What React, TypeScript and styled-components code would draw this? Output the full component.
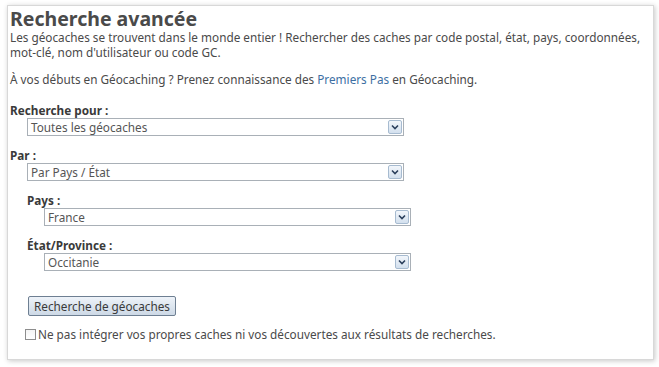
import React from "react";
import styled, { createGlobalStyle } from "styled-components";

const GlobalStyle = createGlobalStyle`
  html, body {
    margin: 0;
    padding: 0;
    background: #ffffff;
  }
  body {
    font-family: "Noto Sans", "Open Sans", Arial, sans-serif;
    color: #4a4a4a;
  }
`;

const Page = styled.div`
  padding: 5px 5px 6px 7px;
  width: 659px;
  height: 367px;
  box-sizing: border-box;
`;

const Panel = styled.div`
  height: 355px;
  box-sizing: border-box;
  border: 1px solid #d8d8d8;
  box-shadow: 1px 1px 5px rgba(0, 0, 0, 0.22);
  background: #ffffff;
  padding: 1px 8px 0 2px;
`;

const Title = styled.h2`
  margin: 0;
  font-size: 19.5px;
  line-height: 23px;
  font-weight: 700;
  color: #4a4a4a;
`;

const Para = styled.p`
  margin: 0 0 12px;
  font-size: 11.75px;
  line-height: 15px;
`;

const TextLink = styled.a`
  color: #3d6fa3;
  text-decoration: none;
`;

const Form = styled.div`
  margin-top: 15px;
  display: flex;
  flex-direction: column;
`;

const Field = styled.div<{ $indent?: number }>`
  display: flex;
  flex-direction: column;
  margin-left: ${(p) => p.$indent || 0}px;
  margin-bottom: 11px;
`;

const Label = styled.label`
  font-size: 11.75px;
  line-height: 16px;
  font-weight: 700;
  color: #3a3a3a;
`;

const Select = styled.div<{ $width: number }>`
  margin-left: 17px;
  width: ${(p) => p.$width}px;
  height: 18px;
  box-sizing: border-box;
  border: 1px solid #a9b0b7;
  background: #ffffff;
  display: flex;
  align-items: center;
  justify-content: space-between;
  font-size: 11.75px;
  color: #555555;
  padding: 0 1px 0 3px;
`;

const Arrow = styled.span`
  width: 14px;
  height: 14px;
  box-sizing: border-box;
  border: 1px solid #a7bbd0;
  border-radius: 2px;
  background: linear-gradient(#f2f6fb, #d3e0ee);
  display: flex;
  align-items: center;
  justify-content: center;
`;

const Actions = styled.div`
  display: flex;
  margin: 14px 0 0 18px;
`;

const Button = styled.button`
  font-family: "Noto Sans", "Open Sans", Arial, sans-serif;
  font-size: 11.75px;
  color: #3a3a3a;
  height: 20px;
  padding: 0 5px;
  border: 1px solid #6e7f92;
  border-radius: 2px;
  background: linear-gradient(#eef3f9, #cdd9e6);
`;

const CheckRow = styled.label`
  display: flex;
  align-items: center;
  margin: 10px 0 0 15px;
  font-size: 11.75px;
  color: #4a4a4a;
`;

const Box = styled.span`
  width: 11px;
  height: 11px;
  box-sizing: border-box;
  border: 1px solid #8d8d8d;
  background: linear-gradient(#f4f4f4, #ffffff);
  margin-right: 2px;
`;

const Chevron = () => (
  <svg width="8" height="6" viewBox="0 0 8 6">
    <path d="M1 1.5 L4 4.5 L7 1.5" fill="none" stroke="#2b3f5c" strokeWidth="1.6" />
  </svg>
);

const Dropdown: React.FC<{ value: string; width: number }> = ({ value, width }) => (
  <Select $width={width}>
    <span>{value}</span>
    <Arrow>
      <Chevron />
    </Arrow>
  </Select>
);

const App: React.FC = () => {
  return (
    <>
      <GlobalStyle />
      <Page>
        <Panel>
          <Title>Recherche avancée</Title>
          <Para>
            Les géocaches se trouvent dans le monde entier ! Rechercher des caches par code postal, état, pays,
            coordonnées, mot-clé, nom d'utilisateur ou code GC.
          </Para>
          <Para>
            À vos débuts en Géocaching ? Prenez connaissance des <TextLink href="#">Premiers Pas</TextLink> en
            Géocaching.
          </Para>
          <Form>
            <Field>
              <Label>Recherche pour :</Label>
              <Dropdown value="Toutes les géocaches" width={377} />
            </Field>
            <Field>
              <Label>Par :</Label>
              <Dropdown value="Par Pays / État" width={377} />
            </Field>
            <Field $indent={17}>
              <Label>Pays :</Label>
              <Dropdown value="France" width={367} />
            </Field>
            <Field $indent={17}>
              <Label>État/Province :</Label>
              <Dropdown value="Occitanie" width={367} />
            </Field>
          </Form>
          <Actions>
            <Button>Recherche de géocaches</Button>
          </Actions>
          <CheckRow>
            <Box />
            Ne pas intégrer vos propres caches ni vos découvertes aux résultats de recherches.
          </CheckRow>
        </Panel>
      </Page>
    </>
  );
};

export default App;
